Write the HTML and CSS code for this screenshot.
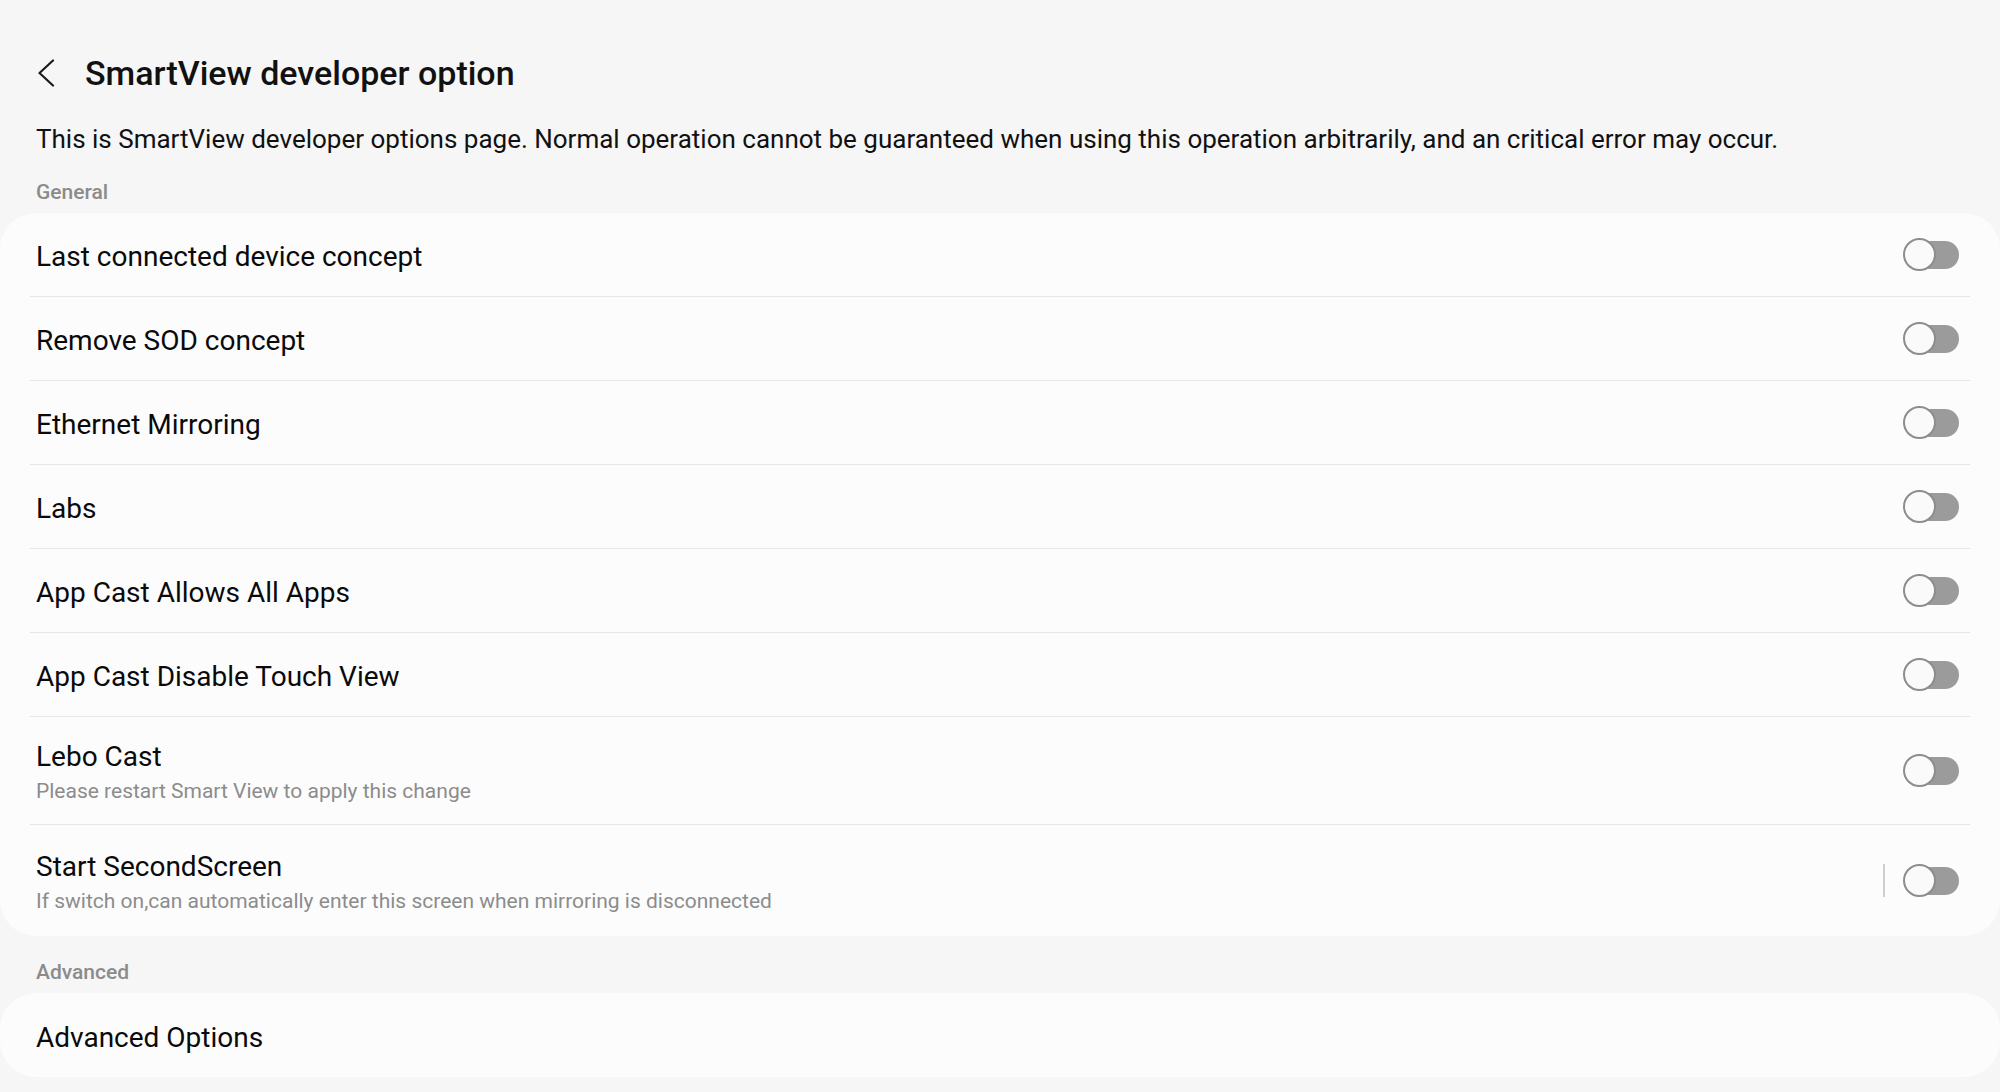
FILE: index.html
```html
<!DOCTYPE html>
<html lang="en">
<head>
<meta charset="utf-8">
<title>SmartView developer option</title>
<link rel="stylesheet" href="styles.css">
</head>
<body>
<div class="page">
  <header class="topbar">
    <svg class="back" width="18" height="28" viewBox="0 0 18 28" aria-hidden="true">
      <path d="M16 1.5 L2.5 14 L16 26.5" fill="none" stroke="#1a1a1a" stroke-width="2.2" stroke-linecap="round" stroke-linejoin="round"/>
    </svg>
    <h1 class="title">SmartView developer option</h1>
  </header>
  <p class="desc">This is SmartView developer options page. Normal operation cannot be guaranteed when using this operation arbitrarily, and an critical error may occur.</p>

  <div class="section-label">General</div>
  <div class="card">
    <div class="row">
      <div class="row-text"><div class="row-title">Last connected device concept</div></div>
      <div class="switch"><span class="knob"></span></div>
    </div>
    <div class="row">
      <div class="row-text"><div class="row-title">Remove SOD concept</div></div>
      <div class="switch"><span class="knob"></span></div>
    </div>
    <div class="row">
      <div class="row-text"><div class="row-title">Ethernet Mirroring</div></div>
      <div class="switch"><span class="knob"></span></div>
    </div>
    <div class="row">
      <div class="row-text"><div class="row-title">Labs</div></div>
      <div class="switch"><span class="knob"></span></div>
    </div>
    <div class="row">
      <div class="row-text"><div class="row-title">App Cast Allows All Apps</div></div>
      <div class="switch"><span class="knob"></span></div>
    </div>
    <div class="row">
      <div class="row-text"><div class="row-title">App Cast Disable Touch View</div></div>
      <div class="switch"><span class="knob"></span></div>
    </div>
    <div class="row row-tall">
      <div class="row-text">
        <div class="row-title">Lebo Cast</div>
        <div class="row-sub">Please restart Smart View to apply this change</div>
      </div>
      <div class="switch"><span class="knob"></span></div>
    </div>
    <div class="row row-last">
      <div class="row-text">
        <div class="row-title">Start SecondScreen</div>
        <div class="row-sub">If switch on,can automatically enter this screen when mirroring is disconnected</div>
      </div>
      <span class="vdivider"></span>
      <div class="switch"><span class="knob"></span></div>
    </div>
  </div>

  <div class="section-label section-label-2">Advanced</div>
  <div class="card">
    <div class="row row-single">
      <div class="row-text"><div class="row-title">Advanced Options</div></div>
    </div>
  </div>
</div>
</body>
</html>
```

FILE: styles.css
```css
* { box-sizing: border-box; }

html, body {
  margin: 0;
  padding: 0;
  background: #f6f6f6;
}

body {
  font-family: Roboto, "Noto Sans", "Liberation Sans", sans-serif;
  color: #0a0a0a;
  width: 2000px;
  height: 1092px;
  overflow: hidden;
}

.topbar {
  display: flex;
  align-items: center;
  height: 40px;
  margin-top: 53px;
  padding-left: 37px;
}

.back {
  display: block;
  flex: none;
}

.title {
  margin: 0 0 0 30px;
  font-size: 34px;
  line-height: 40px;
  font-weight: 500;
  color: #111;
}

.desc {
  margin: 28px 0 0;
  padding-left: 36px;
  font-size: 26px;
  line-height: 36px;
  color: #111;
}

.section-label {
  margin-top: 20px;
  padding-left: 36px;
  font-size: 21px;
  line-height: 30px;
  font-weight: 500;
  color: #8b8b8b;
}

.section-label-2 {
  margin-top: 21px;
}

.card {
  margin-top: 6px;
  background: #fcfcfc;
  border-radius: 36px;
}

.row {
  display: flex;
  align-items: center;
  height: 84px;
  margin: 0 30px;
  padding: 0 11px 0 6px;
  border-bottom: 1px solid #e6e6e6;
}

.row-tall { height: 108px; }

.row-last {
  height: 111px;
  border-bottom: none;
}

.row-single { border-bottom: none; }

.row-text {
  flex: 1;
  padding-top: 5px;
}

.row-title {
  font-size: 28px;
  line-height: 34px;
  color: #0a0a0a;
}

.row-sub {
  margin-top: 2px;
  font-size: 21px;
  line-height: 30px;
  color: #8c8c8c;
}

.vdivider {
  width: 2px;
  height: 33px;
  background: #cfcfcf;
  margin-right: 18px;
  flex: none;
}

.switch {
  position: relative;
  width: 56px;
  height: 33px;
  flex: none;
}

.switch::before {
  content: "";
  position: absolute;
  left: 4px;
  right: 0;
  top: 2.5px;
  height: 28px;
  border-radius: 14px;
  background: #9b9b9b;
}

.knob {
  position: absolute;
  left: 0;
  top: 0;
  width: 33px;
  height: 33px;
  border-radius: 50%;
  background: #fafafa;
  border: 2px solid #8d8d8d;
}
```
